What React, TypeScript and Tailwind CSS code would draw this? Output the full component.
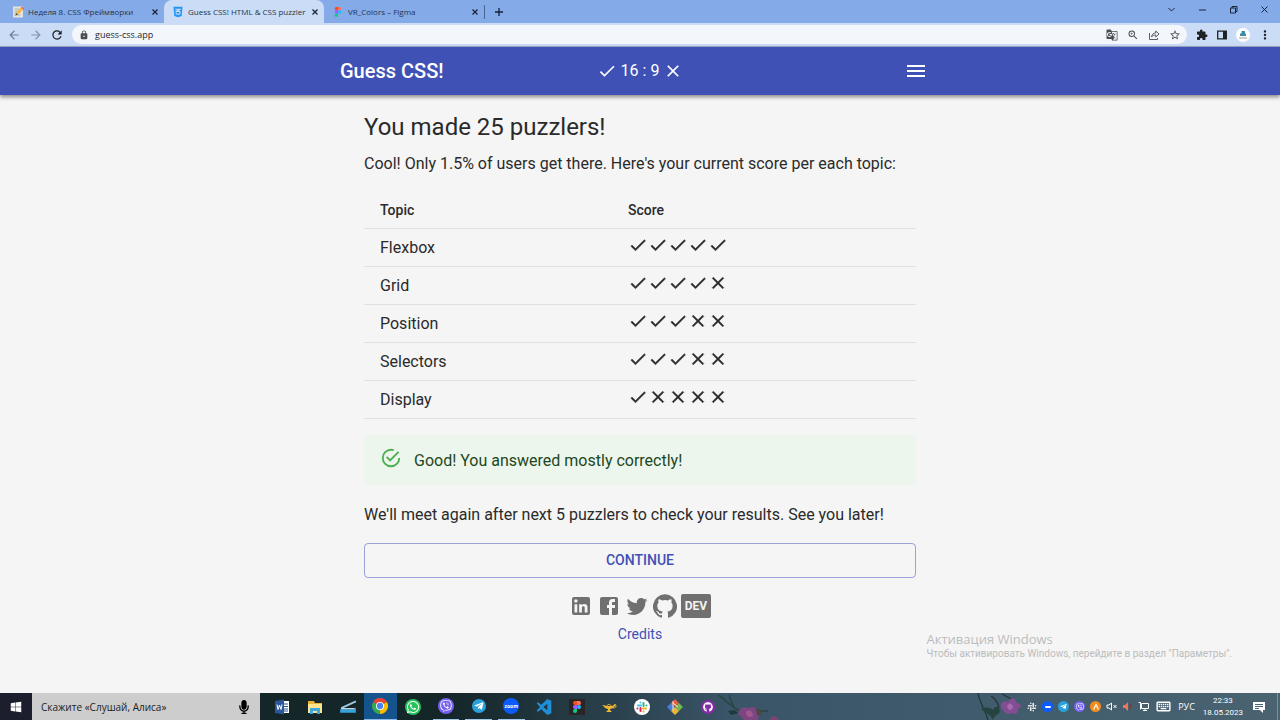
import type { ReactNode } from "react";
import { FaCss3Alt, FaGithub, FaTelegramPlane, FaViber, FaWhatsapp, FaMicrophone, FaWindows } from "react-icons/fa";
import {
  MdArrowBack, MdArrowForward, MdCheck, MdClose, MdExtension, MdGTranslate, MdLock, MdMenu,
  MdMoreVert, MdOutlineKeyboard, MdRefresh, MdStarBorder, MdZoomIn,
} from "react-icons/md";

const topics = [
  { name: "Flexbox", marks: [true, true, true, true, true] },
  { name: "Grid", marks: [true, true, true, true, false] },
  { name: "Position", marks: [true, true, true, false, false] },
  { name: "Selectors", marks: [true, true, true, false, false] },
  { name: "Display", marks: [true, false, false, false, false] },
];

function FigmaLogo({ className }: { className: string }) {
  return (
    <svg viewBox="0 0 16 24" className={className} aria-hidden="true">
      <path fill="#f24e1e" d="M8 0H4a4 4 0 0 0 0 8h4z" />
      <path fill="#ff7262" d="M8 0h4a4 4 0 0 1 0 8H8z" />
      <path fill="#a259ff" d="M8 8H4a4 4 0 0 0 0 8h4z" />
      <circle fill="#1abcfe" cx="12" cy="12" r="4" />
      <path fill="#0acf83" d="M8 16H4a4 4 0 1 0 4 4z" />
    </svg>
  );
}

function MemoIcon() {
  return (
    <svg viewBox="0 0 24 24" className="size-3 shrink-0" aria-hidden="true">
      <path fill="#e4e4dc" d="M2 1h20v22H2z" />
      <path stroke="#9aa4ad" strokeWidth="1.5" d="M5 6h10M5 10h8M5 14h5M5 18h12" />
      <path fill="#f6b733" d="M8 14 18 3l4 4-10 10z" />
      <path fill="#e8596e" d="m18 3 2-2 4 4-2 2z" />
      <path fill="#5b4636" d="m8 14 4 3-5 2z" />
    </svg>
  );
}

function Tab({ icon, title, active = false }: { icon: ReactNode; title: string; active?: boolean }) {
  return (
    <div
      className={
        active
          ? "flex h-full w-40 items-center gap-1 rounded-t-lg bg-[#cbdcf6] pr-1 pl-2"
          : "flex h-full w-40 items-center gap-1 pr-1 pl-2"
      }
    >
      {icon}
      <a href="#" className="min-w-0 flex-1 text-[8px] leading-3 whitespace-nowrap text-[#27344a]">{title}</a>
      <button aria-label={"Close " + title} className="text-[#1c2736]">
        <svg viewBox="0 0 10 10" className="size-2.5"><path d="m2.500 2.500 5 5m0-5-5 5" stroke="currentColor" strokeWidth="1.300" /></svg>
      </button>
    </div>
  );
}

function Browser() {
  return (
    <header className="font-['Open_Sans',sans-serif]">
      <div className="flex h-[23px] items-center bg-[#84abe8]">
        <div className="flex h-full items-center pl-1">
          <Tab icon={<MemoIcon />} title="Неделя 8. CSS Фреймворки" />
          <Tab active icon={<FaCss3Alt className="size-3 shrink-0 text-[#2196f3]" />} title="Guess CSS! HTML & CSS puzzler" />
          <Tab icon={<FigmaLogo className="mx-0.5 h-[10px] w-2 shrink-0" />} title="VR_Colors – Figma" />
        </div>
        <span className="h-3.5 w-px bg-[#4b6693]" />
        <button aria-label="New tab" className="ml-[9px] text-[#152238]">
          <svg viewBox="0 0 10 10" className="size-2.5"><path d="M5 1v8M1 5h8" stroke="currentColor" strokeWidth="1.3" /></svg>
        </button>
        <div className="ml-auto flex items-center gap-[22px] pr-[11px] pb-1 text-[#17243a]">
          <button aria-label="Search tabs"><svg viewBox="0 0 9 9" className="size-[9px]"><path d="m1.500 3 3 3 3-3" fill="none" stroke="currentColor" /></svg></button>
          <button aria-label="Minimize"><svg viewBox="0 0 9 9" className="size-[9px]"><path d="M1 5h7" stroke="currentColor" /></svg></button>
          <button aria-label="Restore"><svg viewBox="0 0 9 9" className="size-[9px]"><path d="M1.500 3h5v5h-5zM3 3V1.500h5v5H6.500" fill="none" stroke="currentColor" /></svg></button>
          <button aria-label="Close window"><svg viewBox="0 0 9 9" className="size-[9px]"><path d="m1.500 1.500 6 6m0-6-6 6" stroke="currentColor" /></svg></button>
        </div>
      </div>
      <div className="flex h-6 items-center border-b border-[#9ba8c8] bg-[#cbdcf6] pr-2 pl-[7px] text-[#202124]">
        <button aria-label="Back" className="text-[#6d7f9b]"><MdArrowBack className="size-3.5" /></button>
        <button aria-label="Forward" className="ml-2 text-[#8494ad]"><MdArrowForward className="size-3.5" /></button>
        <button aria-label="Reload" className="mr-2 ml-[7px]"><MdRefresh className="size-3.5" /></button>
        <div className="flex h-[19px] flex-1 items-center rounded-full bg-[#f3f7fc] pr-1.5 pl-[7px] text-[#4a4e54]">
          <MdLock className="size-2.5" />
          <input aria-label="Address" defaultValue="guess-css.app" className="ml-1.5 min-w-0 flex-1 bg-transparent text-[9px] leading-3 text-[#25282c] outline-none" />
          <div className="flex items-center gap-[9px]">
            <button aria-label="Translate"><MdGTranslate className="size-3" /></button>
            <button aria-label="Zoom"><MdZoomIn className="size-3" /></button>
            <button aria-label="Share">
              <svg viewBox="0 0 12 12" className="size-3" fill="none" stroke="currentColor" strokeWidth="0.900"><path d="M1.500 4v6.500h8V9M3.500 8c.3-2.500 1.800-3.800 4.200-4V2l3.300 3-3.300 3V6C6 6 4.600 6.600 3.500 8z" /></svg>
            </button>
            <button aria-label="Bookmark"><MdStarBorder className="size-3" /></button>
          </div>
        </div>
        <div className="ml-[9px] flex items-center gap-2">
          <button aria-label="Extensions"><MdExtension className="size-3" /></button>
          <button aria-label="Side panel">
            <svg viewBox="0 0 12 12" className="size-3"><path d="M1.700 2.200h8.600v7.600H1.700z" fill="none" stroke="currentColor" strokeWidth="1.300" /><path d="M7 2h3.500v8H7z" fill="currentColor" /></svg>
          </button>
          <button aria-label="Profile" className="flex size-3.5 items-center justify-center rounded-full bg-white">
            <svg viewBox="0 0 12 12" className="size-3"><path d="M3 4.500h6V7H3zM4.500 2H8v2.500H4.500z" fill="#3d8da8" /><path d="M2 9h8" stroke="#9b9b9b" /></svg>
          </button>
          <button aria-label="Menu"><MdMoreVert className="size-3.5" /></button>
        </div>
      </div>
    </header>
  );
}

function Socials() {
  return (
    <div className="flex items-center justify-center gap-1 text-[#707070]">
      <a href="#" aria-label="LinkedIn">
        <svg viewBox="0 0 24 24" className="size-6" fill="currentColor"><path d="M19 3a2 2 0 0 1 2 2v14a2 2 0 0 1-2 2H5a2 2 0 0 1-2-2V5a2 2 0 0 1 2-2h14m-.5 15.500v-5.300a3.260 3.260 0 0 0-3.260-3.260c-.85 0-1.840.52-2.320 1.300v-1.110h-2.790v8.370h2.790v-4.930c0-.77.62-1.400 1.390-1.400a1.400 1.400 0 0 1 1.400 1.400v4.930h2.790M6.880 8.560a1.680 1.680 0 0 0 1.680-1.680c0-.93-.75-1.690-1.680-1.690a1.690 1.690 0 0 0-1.690 1.690c0 .93.76 1.680 1.690 1.680m1.390 9.940v-8.370H5.500v8.370h2.770z" /></svg>
      </a>
      <a href="#" aria-label="Facebook">
        <svg viewBox="0 0 24 24" className="size-6" fill="currentColor"><path d="M5 3h14a2 2 0 0 1 2 2v14a2 2 0 0 1-2 2H5a2 2 0 0 1-2-2V5a2 2 0 0 1 2-2m13 2h-2.500A3.500 3.500 0 0 0 12 8.500V11h-2v3h2v7h3v-7h3v-3h-3V9a1 1 0 0 1 1-1h2V5z" /></svg>
      </a>
      <a href="#" aria-label="Twitter">
        <svg viewBox="0 0 24 24" className="size-6" fill="currentColor"><path d="M22.460 6c-.77.35-1.600.58-2.460.69.88-.53 1.560-1.370 1.880-2.380-.83.5-1.750.85-2.720 1.050C18.370 4.500 17.260 4 16 4c-2.350 0-4.270 1.920-4.270 4.290 0 .34.04.67.11.98C8.280 9.090 5.110 7.380 3 4.790c-.37.63-.58 1.370-.58 2.150 0 1.490.75 2.810 1.910 3.560-.71 0-1.370-.2-1.950-.5v.03c0 2.080 1.480 3.820 3.440 4.210a4.220 4.220 0 0 1-1.930.07 4.280 4.280 0 0 0 4 2.980 8.521 8.521 0 0 1-5.330 1.840c-.34 0-.68-.02-1.020-.06C3.440 20.290 5.700 21 8.120 21 16 21 20.330 14.460 20.330 8.790c0-.19 0-.37-.01-.56.84-.6 1.560-1.360 2.140-2.230z" /></svg>
      </a>
      <a href="#" aria-label="GitHub">
        <svg viewBox="0 0 24 24" className="size-6" fill="currentColor"><path d="M12 .3a12 12 0 0 0-3.800 23.400c.6.1.8-.3.8-.6v-2c-3.300.7-4-1.600-4-1.600-.6-1.400-1.400-1.800-1.400-1.800-1-.7.1-.7.1-.7 1.200 0 1.900 1.200 1.900 1.200 1 1.800 2.800 1.300 3.500 1 0-.8.4-1.300.7-1.600-2.700-.3-5.500-1.300-5.500-6 0-1.200.5-2.300 1.300-3.100-.2-.4-.6-1.600 0-3.200 0 0 1-.3 3.400 1.200a11.500 11.500 0 0 1 6 0c2.300-1.500 3.300-1.200 3.300-1.200.6 1.600.2 2.800 0 3.200.9.8 1.300 1.900 1.300 3.200 0 4.600-2.800 5.600-5.500 5.900.5.4.9 1 .9 2.200v3.300c0 .3.1.7.8.6A12 12 0 0 0 12 .3" /></svg>
      </a>
      <a href="#" className="flex h-6 w-[30px] items-center justify-center rounded-xs bg-[#707070] text-xs font-bold text-[#f5f5f5]">DEV</a>
    </div>
  );
}

function Mark({ ok }: { ok: boolean }) {
  return (
    <svg viewBox="0 0 24 24" className="size-5" fill="currentColor" stroke="currentColor" strokeWidth="0.500" role="img" aria-label={ok ? "Correct" : "Wrong"}>
      <path d={ok ? "M9 16.170 4.830 12l-1.420 1.410L9 19 21 7l-1.410-1.410z" : "M19 6.410 17.590 5 12 10.590 6.410 5 5 6.410 10.590 12 5 17.590 6.410 19 12 13.410 17.590 19 19 17.590 13.410 12z"} />
    </svg>
  );
}

function Page() {
  return (
    <div className="relative flex flex-1 flex-col bg-[#f5f5f5] font-['Roboto',sans-serif] text-[#2a2a2a]">
      <div className="bg-[#3f51b5] text-white shadow-[0_2px_4px_rgba(0,0,0,0.45)]">
        <div className="mx-auto grid h-12 max-w-[600px] grid-cols-3 items-center pr-3">
          <a href="#" className="text-xl font-medium whitespace-nowrap">Guess CSS!</a>
          <div className="flex items-center justify-center gap-1 pl-3">
            <MdCheck className="size-5" />
            <span>16 : 9</span>
            <MdClose className="size-5" />
          </div>
          <button aria-label="Open menu" className="justify-self-end"><MdMenu className="size-6" /></button>
        </div>
      </div>
      <main className="mx-auto w-full max-w-[600px] px-6 pt-4 text-base">
        <h1 className="text-2xl leading-8">You made 25 puzzlers!</h1>
        <p className="mt-[9px] leading-6">Cool! Only 1.5% of users get there. Here's your current score per each topic:</p>
        <table className="mt-[15px] w-full table-fixed text-left">
          <thead>
            <tr className="h-[37px] border-b border-[#e0e0e0] text-sm">
              <th className="w-[248px] px-4 pt-0.5 font-medium">Topic</th>
              <th className="px-4 pt-0.5 font-medium">Score</th>
            </tr>
          </thead>
          <tbody>
            {topics.map((t) => (
              <tr key={t.name} className="h-[38px] border-b border-[#e0e0e0]">
                <td className="px-4 pt-0.5">{t.name}</td>
                <td className="px-4 pb-1">
                  <div className="flex">
                    {t.marks.map((ok, i) => <Mark key={i} ok={ok} />)}
                  </div>
                </td>
              </tr>
            ))}
          </tbody>
        </table>
        <div role="status" className="mt-4 flex h-[50px] items-center gap-3 rounded bg-[#ecf6ed] px-4 text-[#1e4620]">
          <svg viewBox="0 0 24 24" className="mb-1 size-[22px] text-[#4caf50]" fill="currentColor" aria-hidden="true"><path d="M20 12a8 8 0 1 1-8-8c.76 0 1.500.11 2.200.31l1.570-1.570A9.822 9.822 0 0 0 12 2a10 10 0 1 0 10 10M7.910 10.080 6.500 11.500 11 16 21 6l-1.410-1.420L11 13.170z" /></svg>
          <span className="pt-0.5">Good! You answered mostly correctly!</span>
        </div>
        <p className="mt-[18px] leading-6">We'll meet again after next 5 puzzlers to check your results. See you later!</p>
        <button className="mt-4 h-[35px] w-full rounded border border-[#3f51b5]/50 text-sm font-medium text-[#3f51b5]">CONTINUE</button>
        <div className="mt-4"><Socials /></div>
        <p className="mt-1.5 text-center text-sm leading-5 text-[#3f51b5]"><a href="#">Credits</a></p>
      </main>
      <aside className="absolute right-12 bottom-8 text-[#bcbcbc]">
        <p className="font-['Open_Sans',sans-serif] text-[13px] leading-4">Активация Windows</p>
        <p className="text-[10px] leading-[14px]">Чтобы активировать Windows, перейдите в раздел "Параметры".</p>
      </aside>
    </div>
  );
}

function ChromeLogo() {
  return (
    <svg viewBox="0 0 24 24" className="size-4" aria-hidden="true">
      <path fill="#ea4335" d="M12 12 1.600 6A12 12 0 0 1 22.400 6z" />
      <path fill="#fbbc04" d="M12 12 22.400 6A12 12 0 0 1 12 24z" />
      <path fill="#34a853" d="M12 12v12A12 12 0 0 1 1.600 6z" />
      <path fill="#ea4335" d="M12 6h10.400L12 3z" />
      <circle cx="12" cy="12" r="6" fill="#fff" />
      <circle cx="12" cy="12" r="4.700" fill="#4285f4" />
    </svg>
  );
}

function Round({ className, children }: { className: string; children?: ReactNode }) {
  return <span className={"flex items-center justify-center rounded-full text-white " + className}>{children}</span>;
}

function SlackMark({ className, mono = false }: { className: string; mono?: boolean }) {
  const [b, g, y, r] = mono ? ["#eee", "#eee", "#eee", "#eee"] : ["#36c5f0", "#2eb67d", "#ecb22e", "#e01e5a"];
  return (
    <svg viewBox="0 0 24 24" className={className} fill="none" strokeWidth="4" strokeLinecap="round" aria-hidden="true">
      <path stroke={b} d="M4 9h6M9 3v0" /><path stroke={g} d="M15 4v6M21 9v0" />
      <path stroke={y} d="M14 15h6M15 21v0" /><path stroke={r} d="M9 14v6M3 15v0" />
    </svg>
  );
}

const apps: { name: string; icon: ReactNode; state?: "active" | "open" }[] = [
  { name: "Word", icon: <svg viewBox="0 0 16 16" className="size-4"><path fill="#fff" d="M8 2h7v12H8z" /><path stroke="#2b579a" d="M9 5h5M9 7.500h5M9 10h5M9 12h5" /><path fill="#2b579a" d="M1 2 10 .5v15L1 14z" /><path d="m3 5.500 1 5 1.500-4.500L7 10.500l1-5" fill="none" stroke="#fff" /></svg> },
  { name: "File Explorer", icon: <svg viewBox="0 0 16 16" className="size-4"><path fill="#e8b339" d="M1 2h6l1 2h7v10H1z" /><path fill="#ffe48f" d="M1 5h14v9H1z" /><path fill="#3da7df" d="M3 9h10v6h-3v-3H6v3H3z" /></svg> },
  { name: "Scanner", icon: <svg viewBox="0 0 16 16" className="size-[18px]"><path d="m2 9 13-6" stroke="#9ecbe0" strokeWidth="1.500" /><path d="M1 10h13l1-2v5H1z" fill="#35a5dc" /><path d="M2 9.500h12" stroke="#d9eef7" /></svg> },
  { name: "Chrome", icon: <ChromeLogo />, state: "active" },
  { name: "WhatsApp", icon: <Round className="size-4 bg-[#25c35a]"><FaWhatsapp className="size-3.5" /></Round> },
  { name: "Viber", icon: <Round className="size-4 bg-[#7360f2]"><FaViber className="size-3" /></Round>, state: "open" },
  { name: "Telegram", icon: <Round className="size-3.5 bg-[#2aa1da]"><FaTelegramPlane className="size-2.5" /></Round>, state: "open" },
  { name: "Zoom", icon: <Round className="size-4 bg-[#0b5cff]"><span className="text-[5px] leading-none font-bold">zoom</span></Round>, state: "open" },
  { name: "Visual Studio Code", icon: <svg viewBox="0 0 24 24" className="size-4"><path fill="#1f8fd8" d="M17 0 8 8.500 3 5 1 6.500 6 12l-5 5.500L3 19l5-3.500L17 24l6-2.500v-19zM17 17l-6-5 6-5z" /></svg> },
  { name: "Figma", icon: <span className="flex size-4 items-center justify-center bg-[#2c2424]"><FigmaLogo className="h-3 w-2" /></span> },
  { name: "Lamp", icon: <svg viewBox="0 0 16 12" className="h-3 w-4"><path fill="#efb62f" d="M1 4c3 0 3 1 5 1h5c1 0 2-2 4-2-1 2-3 5-6 5v1l2 2H5l2-2V8C4 8 3 5 1 4z" /><path d="M6 5c0-2 4-2 4 0M13 4c3-1 3 3-1 3" stroke="#efb62f" fill="none" /></svg> },
  { name: "Slack", icon: <Round className="size-4 bg-white"><SlackMark className="size-3" /></Round> },
  { name: "Git", icon: <svg viewBox="0 0 16 16" className="size-4"><path fill="#4c80d8" d="m0 8 4-4 4 4-4 4z" /><path fill="#e85b3b" d="m4 4 4-4 4 4-4 4z" /><path fill="#70b653" d="m8 8 4-4 4 4-4 4z" /><path fill="#e9b83b" d="m4 12 4-4 4 4-4 4z" /><path d="M6 2v9M6 4l5 4" stroke="#eee" /></svg> },
  { name: "GitHub Desktop", icon: <Round className="size-3.5 bg-[#842ba5]"><FaGithub className="size-2.5" /></Round> },
];

function Flower() {
  return (
    <svg viewBox="0 0 50 27" className="h-full w-[50px]" aria-hidden="true">
      <path d="M1 0c1 8 4 10 5 15 3 5 4 8 5 12M14 3c5 3 7 7 8 12M25 1l11 6" stroke="#22333a" strokeWidth="1.300" fill="none" />
      <path d="M4 16c6-3 10-1 12 1 2-5 6-4 7 1-2 5-5 3-7 9-3-6-7-7-12-11z" fill="#24443f" />
      <path d="M24 14c-1-5 4-7 7-5 3-6 8-4 8 1 5 0 7 4 2 6 0 5-3 6-6 4-5 3-8-1-11-6z" fill="#834e91" />
      <path d="M30 13c2-4 5-3 6 1-1 4-5 4-6-1z" fill="#a56bb0" />
    </svg>
  );
}

function Branch() {
  return (
    <svg viewBox="0 0 80 27" className="-ml-5 h-full w-20" aria-hidden="true">
      <path d="M14 2c6 3 10 10 22 16h28M26 2c-2 4 2 6 4 12" stroke="#2b4444" strokeWidth="1.500" fill="none" />
      <path d="M24 18l6-1 5 3-8 2z" fill="#1f3b3c" />
      <path d="M34 21c1-7 7-7 11-6 5-2 9 1 10 5l-1 7H40z" fill="#7c4680" />
      <path d="M42 19c3-3 7-1 7 4-3 2-7 1-7-4z" fill="#a0588f" />
      <path d="M52 16c4-2 6 2 5 6h-4z" fill="#4d4940" />
      <path d="M66 27c0-4 6-6 9 0z" fill="#7c4670" />
    </svg>
  );
}

function Taskbar() {
  return (
    <footer className="flex h-[27px] items-center bg-linear-to-r from-[#152629] from-35% via-[#3a5568] via-57% to-[#496371] font-['Open_Sans',sans-serif] text-white">
      <button aria-label="Start" className="flex h-full w-8 items-center justify-center bg-[#1c1e2d]"><FaWindows className="size-3" /></button>
      <label className="flex h-full w-[228px] items-center bg-[#cdcdcd] pr-2.5 pl-[9px] text-[#222]">
        <input aria-label="Search" placeholder="Скажите «Слушай, Алиса»" className="min-w-0 flex-1 bg-transparent text-[10px] leading-4 outline-none placeholder:text-[#222]" />
        <FaMicrophone className="h-3.5 w-3 text-black" />
      </label>
      <nav aria-label="Apps" className="ml-1.5 grid h-full w-[458px] grid-cols-14">
        {apps.map((a) => (
          <button key={a.name} aria-label={a.name} className="h-full">
            <span
              className={
                a.state === "active"
                  ? "flex h-full items-center justify-center border-b border-[#8dbbe8] bg-[#14538c]"
                  : a.state === "open"
                    ? "mx-[3px] flex h-full items-center justify-center border-b border-[#a3c7ea]"
                    : "flex h-full items-center justify-center"
              }
            >
              {a.icon}
            </span>
          </button>
        ))}
      </nav>
      <Branch />
      <div className="ml-auto flex h-full items-center">
        <Flower />
        <div className="mr-1.5 flex items-center gap-[5px]">
          <SlackMark mono className="size-2.5" />
          <Round className="size-[11px] bg-[#0b5cff]"><span className="h-0.5 w-1.5 rounded bg-white" /></Round>
          <Round className="size-[11px] bg-[#2aa1da]"><FaTelegramPlane className="size-[7px]" /></Round>
          <Round className="size-[11px] bg-[#7360f2]"><FaViber className="size-2" /></Round>
          <Round className="size-[11px] bg-[#f58a1f]"><svg viewBox="0 0 10 10" className="size-2"><path d="M2 8 5 2l3 6" fill="none" stroke="white" strokeWidth="1.500" /></svg></Round>
          <svg viewBox="0 0 11 11" className="size-[11px]" fill="none" stroke="white"><path d="M1 4h2l2.500-2v7L3 7H1zM7.500 4l3 3m0-3-3 3" /></svg>
          <svg viewBox="0 0 11 11" className="size-[11px]"><path d="M1 4h2l3-3v9L3 7H1z" fill="#e8785a" /><path d="M8 3q2 2.500 0 5" stroke="#7d2f2c" fill="none" /></svg>
          <svg viewBox="0 0 12 11" className="h-[11px] w-3" fill="none" stroke="white"><path d="M3.500 2.500h7v5h-7zM7 7.500v2M5 9.500h4M.5 1.500h2v7" /></svg>
          <MdOutlineKeyboard className="size-[17px]" />
        </div>
        <span className="text-[9px]">РУС</span>
        <time className="ml-2 text-center font-['Roboto',sans-serif] text-[8px] leading-3">22:33<br />18.05.2023</time>
        <button aria-label="Notifications" className="mr-3 ml-2.5">
          <svg viewBox="0 0 12 12" className="size-3"><path d="M0 1h12v8h-2v3L7 9H0z" fill="white" /><path d="M2 3.500h8M2 5.500h8M2 7.500h4" stroke="#496371" /></svg>
        </button>
        <span className="mr-0.5 h-full w-px bg-[#7d929c]" />
      </div>
    </footer>
  );
}

export default function App() {
  return (
    <div className="flex min-h-screen flex-col">
      <Browser />
      <Page />
      <Taskbar />
    </div>
  );
}
